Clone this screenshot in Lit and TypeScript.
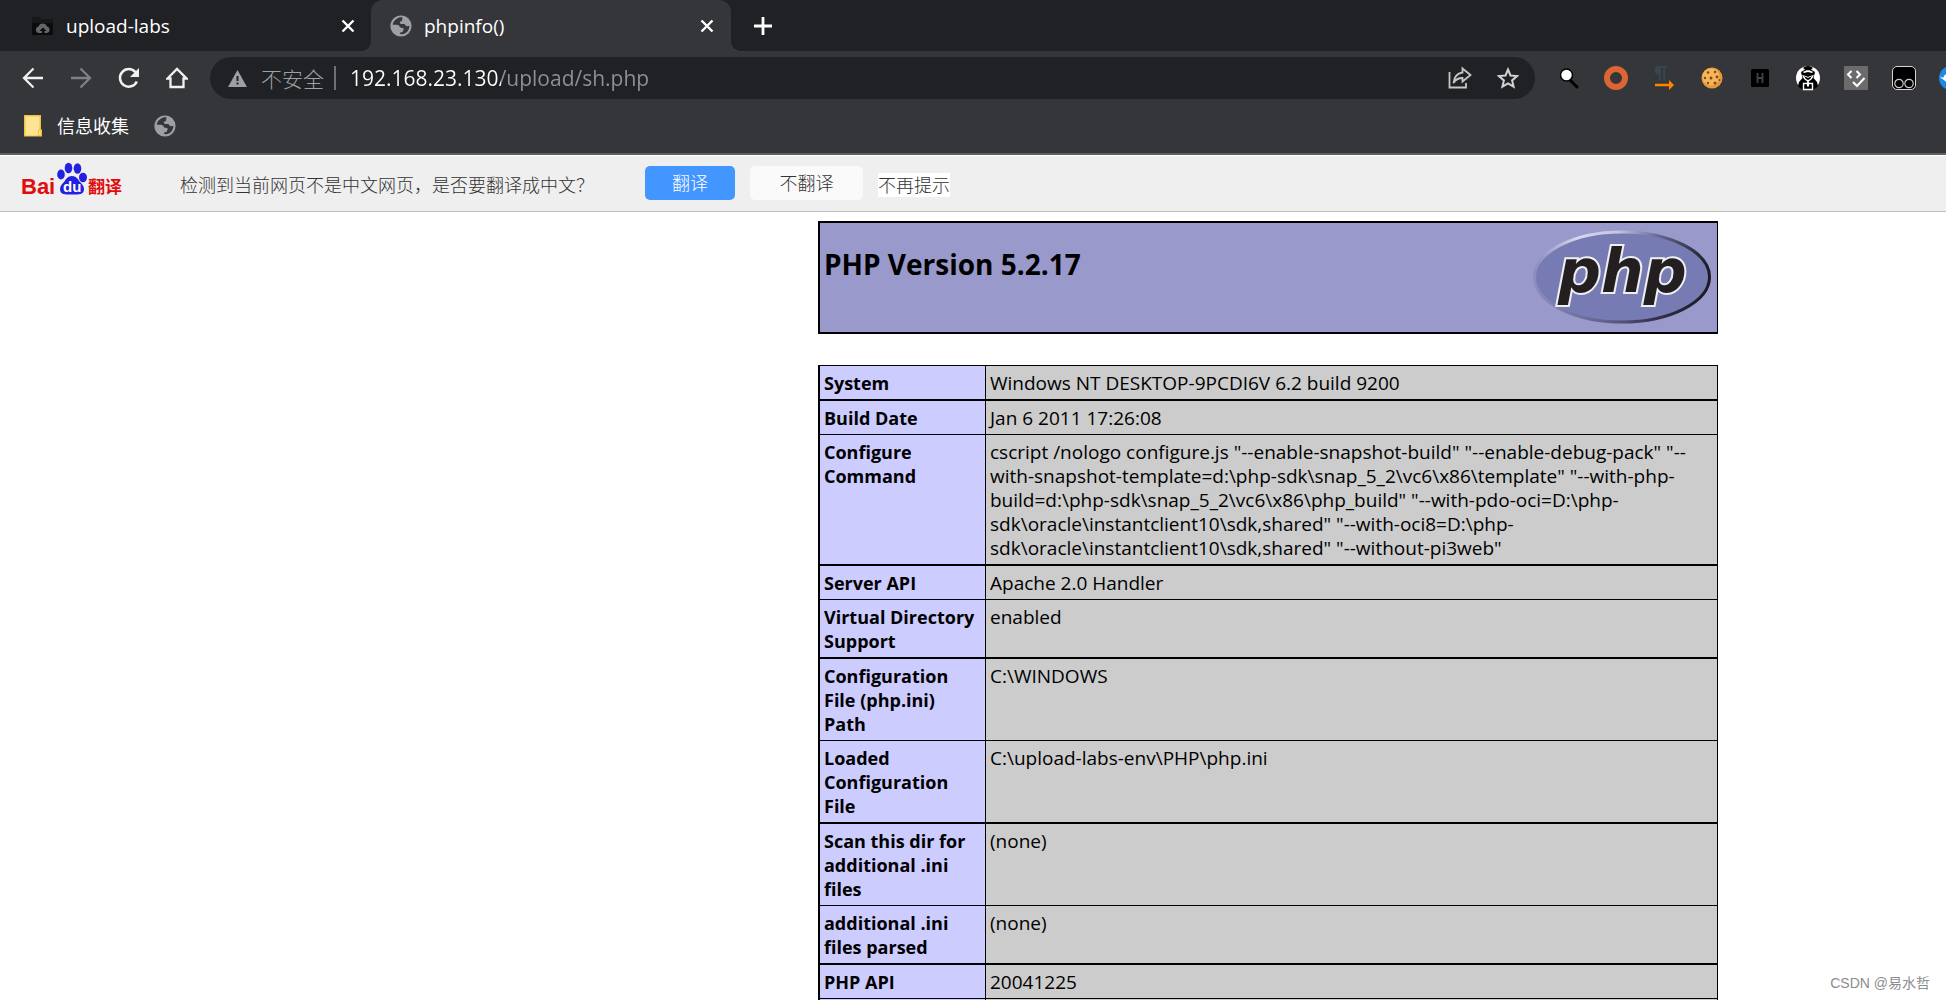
import { LitElement, html, svg, css } from "lit";
import { customElement, property } from "lit/decorators.js";

const globe = svg`
  <circle cx="11" cy="11" r="10.6" fill="#9aa0a6"/>
  <path d="M12.5 2.4c-2.2-.3-4.3.2-6 1.5C4 5.700 2.900 7.500 2.700 9.800c2.100-.2 4.600-.1 5.900.4 1.200.6.7 1.900 1.700 2.300 1.500.5 3.300.1 3.500 1.300.2 1-.9 1.300-.9 2.500 0 1-1.500.9-2.400 1.100-.7.2-.6 1.200-.1 1.700 3.700.3 6.900-1.700 8.200-4.700.6-1.400.8-2.600.8-3.600-1.200.5-2.300.7-3.200.2-1.100-.5-.9-1.600-2.100-1.900-1.600-.3-3.700.1-4.200-1.200-.5-1.200.8-1.600 1.800-2 .8-.4.1-1.500.7-2.400z" fill="#35363a"/>`;

const extensionIcons = [
  { name: "Search", art: svg`<path d="M15 15l7 7" stroke="#000" stroke-width="3" stroke-linecap="round"/><circle cx="11.500" cy="10" r="6" fill="#fff" stroke="#000" stroke-width="1.500"/>` },
  { name: "Ring", art: svg`<circle cx="13" cy="13" r="9" fill="none" stroke="#de6533" stroke-width="6"/>` },
  { name: "Paragraph", art: svg`<path d="M12 1H8a4.500 4.500 0 0 0 0 9v6h1.800V2.500h2.400V16H14V2.500h2V1z" fill="#37474f"/><path d="M4 18.700h14v-3.700l5 5-5 5v-3.700H4z" fill="#ff8200"/>` },
  { name: "Cookie", art: svg`<circle cx="13" cy="13" r="10.500" fill="#e89a3b"/><circle cx="12" cy="12" r="8.500" fill="#f5b659"/><g fill="#86451f"><circle cx="9" cy="7.500" r="1.300"/><circle cx="16" cy="7" r="1.200"/><circle cx="6" cy="13" r="1.200"/><circle cx="12" cy="13" r="1.500"/><circle cx="18" cy="12" r="1.400"/><circle cx="9" cy="18" r="1.200"/><circle cx="16" cy="18" r="1.500"/><circle cx="20.500" cy="15" r="1"/></g>` },
  { name: "H", art: svg`<rect x="4" y="4" width="18" height="18" rx="1.500" fill="#000"/><path d="M10.500 8v10M15.500 8v10M10.500 13h5" stroke="#424347" stroke-width="1.800"/>` },
  { name: "Hooded figure", art: svg`<circle cx="13" cy="13" r="12" fill="#fff"/><path d="M13 1c-2 0-3.500.7-5 2l2 1.500L6 7l1.500 6L4 17l-1 4c2 2 4 3.500 6 4h8c2-.5 4-2 6-4l-1-4-3.500-4L20 7l-4-2.500L18 3c-1.500-1.300-3-2-5-2z" fill="#000"/><path d="M8 7c3-2.500 7-2.500 10 0l-1 1-4-1-4 1z" fill="#fff"/><path d="M7 10l4 1 2 1 2-1 4-1-2 4-4 3-4-3z" fill="#fff"/><path d="M9 11l4 2 4-2-2 3-2 1-2-1z" fill="#000"/><path d="M8.500 18.500h9v6h-9z" fill="none" stroke="#fff" stroke-width="1.400"/><path d="M12 16.500h2v5h-2z" fill="#fff"/>` },
  { name: "Code check", art: svg`<rect x="1" y="1" width="24" height="24" rx="1" fill="#6b6b6b"/><path d="M8.500 6L5 9.500 8.500 13M13.500 6L17 9.500 13.500 13M10 17l4 4 7.500-8" fill="none" stroke="#fff" stroke-width="2"/>` },
  { name: "Tampermonkey", art: svg`<rect x="1.500" y="1.500" width="23" height="23" rx="4.500" fill="#000" stroke="#d6d6d6"/><circle cx="8" cy="18.500" r="4.200" fill="#000" stroke="#c8c8c8" stroke-width="1.200"/><circle cx="18" cy="18.500" r="4.200" fill="#000" stroke="#c8c8c8" stroke-width="1.200"/>` },
  { name: "Bird", art: svg`<circle cx="12" cy="13" r="12" fill="#1e88e5"/><path d="M1 11c1 1 2 1.500 3.500 1.500C5 10 7 8.500 10 9l4 4-1 5c-4 0-6-1-8-3-2-1-3-2-4-4z" fill="#fff"/>` },
];

const facts: { key: string; value: string }[] = [
  { key: "System", value: "Windows NT DESKTOP-9PCDI6V 6.2 build 9200" },
  { key: "Build Date", value: "Jan 6 2011 17:26:08" },
  {
    key: "Configure\nCommand",
    value:
      'cscript /nologo configure.js "--enable-snapshot-build" "--enable-debug-pack" "--\n' +
      'with-snapshot-template=d:\\php-sdk\\snap_5_2\\vc6\\x86\\template" "--with-php-\n' +
      'build=d:\\php-sdk\\snap_5_2\\vc6\\x86\\php_build" "--with-pdo-oci=D:\\php-\n' +
      'sdk\\oracle\\instantclient10\\sdk,shared" "--with-oci8=D:\\php-\n' +
      'sdk\\oracle\\instantclient10\\sdk,shared" "--without-pi3web"',
  },
  { key: "Server API", value: "Apache 2.0 Handler" },
  { key: "Virtual Directory\nSupport", value: "enabled" },
  { key: "Configuration\nFile (php.ini)\nPath", value: "C:\\WINDOWS" },
  { key: "Loaded\nConfiguration\nFile", value: "C:\\upload-labs-env\\PHP\\php.ini" },
  { key: "Scan this dir for\nadditional .ini\nfiles", value: "(none)" },
  { key: "additional .ini\nfiles parsed", value: "(none)" },
  { key: "PHP API", value: "20041225" },
  { key: "", value: "" },
];

const reset = css`
  * { box-sizing: border-box; }
  svg { display: block; flex: none; }
  button { margin: 0; padding: 0; border: 0; background: none; font: inherit; color: inherit; display: grid; place-items: center; }
`;

@customElement("browser-tabs")
export class BrowserTabs extends LitElement {
  static styles = [reset, css`
    :host { display: block; }
    .strip { display: flex; height: 51px; background: #202124; color: #fff; font-size: 19px; }
    .tab { display: flex; align-items: center; height: 51px; padding: 0 14px 0 19px; }
    .first { width: 371px; padding-left: 31px; padding-right: 13px; }
    .active { position: relative; width: 360px; background: #35363a; border-radius: 12px 12px 0 0; }
    .active::before, .active::after { content: ""; position: absolute; bottom: 0; width: 10px; height: 10px; }
    .active::before { left: -10px; background: radial-gradient(circle at 0 0, #202124 10px, #35363a 10px); }
    .active::after { right: -10px; background: radial-gradient(circle at 100% 0, #202124 10px, #35363a 10px); }
    .title { flex: 1; margin-left: 12px; line-height: 24px; }
    .close { width: 20px; height: 20px; }
    .add { width: 64px; height: 51px; }
  `];

  private closeIcon = html`<svg width="14" height="14" viewBox="0 0 14 14"><path d="M1.500 1.500l11 11M12.500 1.500l-11 11" stroke="#fff" stroke-width="2.400"/></svg>`;

  render() {
    return html`<div class="strip">
      <div class="tab first">
        <svg width="23" height="20" viewBox="0 0 23 20"><path d="M1 1h7l2 2h12v15a1 1 0 0 1-1 1H1z" fill="#17181a"/><path d="M1 7h21v11a1 1 0 0 1-1 1H1z" fill="#0b0b0c"/><path d="M8 17a3.300 3.300 0 0 1-.5-6.500 4.500 4.500 0 0 1 8.500 0A3.300 3.300 0 0 1 15.500 17h-2v-2h2L12 11.500 8.500 15H11v2z" fill="#626569"/></svg>
        <span class="title">upload-labs</span>
        <button class="close" aria-label="Close upload-labs">${this.closeIcon}</button>
      </div>
      <div class="tab active">
        <svg width="22" height="22" viewBox="0 0 22 22">${globe}</svg>
        <span class="title">phpinfo()</span>
        <button class="close" aria-label="Close phpinfo()">${this.closeIcon}</button>
      </div>
      <button class="add" aria-label="New tab"><svg width="18" height="18" viewBox="0 0 18 18"><path d="M9 0v18M0 9h18" stroke="#fff" stroke-width="2.800"/></svg></button>
    </div>`;
  }
}

@customElement("browser-toolbar")
export class BrowserToolbar extends LitElement {
  @property() address = "192.168.23.130/upload/sh.php";

  static styles = [reset, css`
    :host { display: block; background: #35363a; border-bottom: 2px solid #5f6064; }
    .bar { display: flex; align-items: center; height: 54px; padding-left: 9px; }
    .nav { width: 48px; height: 48px; }
    .omnibox { flex: 1; min-width: 0; display: flex; align-items: center; height: 42px; margin-left: 9px; padding: 0 15px 0 18px; border-radius: 21px; background: #202124; font-size: 21px; }
    .unsafe { margin-left: 14px; color: #9aa0a6; font-weight: 300; }
    .rule { width: 2px; height: 24px; margin: 0 14px 0 10px; background: #6d7074; }
    .url { flex: 1; min-width: 0; padding: 0; border: 0; outline: 0; font: inherit; line-height: 30px; color: transparent; background: linear-gradient(90deg, #fff 151px, #8f9194 151px); background-clip: text; -webkit-background-clip: text; }
    .share { width: 24px; height: 24px; margin-right: 24px; }
    .star { width: 24px; height: 24px; }
    .extensions { flex: none; display: flex; width: 411px; padding-left: 9px; overflow: hidden; }
    .ext { flex: none; width: 48px; height: 48px; }
    .bookmarks { display: flex; align-items: center; height: 48px; padding: 0 24px 6px; margin: 0; gap: 25px; }
    .bookmark { display: flex; align-items: center; gap: 15px; color: #fff; text-decoration: none; font-size: 18px; line-height: 24px; }
  `];

  render() {
    return html`
      <div class="bar">
        <button class="nav" aria-label="Back"><svg width="22" height="22" viewBox="0 0 22 22" fill="none" stroke="#f1f1f1" stroke-width="2.300"><path d="M21 11H2.500M11.500 1.500L2 11l9.500 9.500"/></svg></button>
        <button class="nav" aria-label="Forward"><svg width="22" height="22" viewBox="0 0 22 22" fill="none" stroke="#808185" stroke-width="2.300"><path d="M1 11h18.500M10.500 1.500L20 11l-9.500 9.500"/></svg></button>
        <button class="nav" aria-label="Reload"><svg width="22" height="22" viewBox="0 0 22 22"><path d="M18.800 14.500A8.800 8.800 0 1 1 17.500 5.200" fill="none" stroke="#f1f1f1" stroke-width="2.500"/><path d="M21 1v9h-9z" fill="#f1f1f1"/></svg></button>
        <button class="nav" aria-label="Home"><svg width="22" height="22" viewBox="0 0 22 22"><path d="M1.500 11.500L11 2l9.500 9.500h-3V20h-13v-8.500z" fill="none" stroke="#f1f1f1" stroke-width="2.300"/></svg></button>
        <div class="omnibox">
          <svg width="19" height="17" viewBox="0 0 19 17"><path d="M9.500 0L19 17H0z" fill="#9aa0a6"/><path d="M9.500 6v5M9.500 12.500v2" stroke="#202124" stroke-width="2"/></svg>
          <label class="unsafe" for="url">不安全</label>
          <span class="rule"></span>
          <input class="url" id="url" .value=${this.address} spellcheck="false">
          <button class="share" aria-label="Share"><svg width="24" height="24" viewBox="0 0 24 24" fill="none" stroke="#c4c7c5" stroke-width="1.800"><path d="M1.500 6v15.500H18V17"/><path d="M14.500 2.500L22.500 9l-8 6.500V12c-4 0-7 1.500-9 5 .5-5.500 3.500-9.500 9-10.500z"/></svg></button>
          <button class="star" aria-label="Bookmark this page"><svg width="22" height="22" viewBox="0 0 22 22"><path d="M11 2.500l2.500 6 6.500.6-4.900 4.300 1.500 6.300L11 16.300l-5.600 3.400 1.500-6.300L2 9.100l6.500-.6z" fill="none" stroke="#d0d2d4" stroke-width="2"/></svg></button>
        </div>
        <div class="extensions">
          ${extensionIcons.map((e) => html`<button class="ext" aria-label=${e.name}><svg width="26" height="26" viewBox="0 0 26 26">${e.art}</svg></button>`)}
        </div>
      </div>
      <nav class="bookmarks">
        <a class="bookmark" href="#"><svg width="18" height="22" viewBox="0 0 18 22"><path d="M0 0h17v14l1 1v6.500H0z" fill="#f0c23e"/><path d="M1.500 1.500h14V14l-1.500 1v5.500H1.500z" fill="#ffe593"/><path d="M15 15.500h1.500v4.500H15z" fill="#ffe593"/></svg><span>信息收集</span></a>
        <a class="bookmark" href="#" aria-label="Website"><svg width="22" height="22" viewBox="0 0 22 22">${globe}</svg></a>
      </nav>`;
  }
}

@customElement("translate-bar")
export class TranslateBar extends LitElement {
  static styles = [reset, css`
    :host { display: block; }
    .bar { display: flex; align-items: center; height: 57px; padding: 0 0 2px 21px; border-top: 1px solid #fff; border-bottom: 1px solid #bdbdbd; background: #efefef; color: #333; font-size: 18px; font-weight: 300; line-height: 24px; }
    .message { width: 465px; margin: 4px 0 0 57px; }
    .btn { height: 34px; border-radius: 5px; }
    .yes { width: 90px; background: #4395ff; color: #fff; }
    .no { width: 113px; margin: 0 15px; background: #fafafa; }
    .never { margin-top: 4px; background: #fff; }
    .brand { font-family: "Liberation Sans", "Noto Sans CJK SC", sans-serif; font-weight: 700; }
  `];

  render() {
    return html`<div class="bar">
      <svg width="102" height="44" viewBox="0 0 102 44" role="img" aria-label="Baidu translate">
        <g class="brand"><text x="0" y="33" font-size="22" fill="#e10c0c">Bai</text>
        <g fill="#2420e0"><ellipse cx="40" cy="13.500" rx="3.800" ry="5"/><ellipse cx="47.500" cy="7" rx="3.800" ry="5.200"/><ellipse cx="56.500" cy="7.500" rx="3.800" ry="5.200"/><ellipse cx="62" cy="16.500" rx="4" ry="4.800"/><path d="M51 15c4 0 6 3 8 6 2 2 4 4 4 7 0 5-4 6-12 5.500-8 .5-12-.5-12-5.500 0-3 2-5 4-7 2-3 4-6 8-6z"/></g>
        <text x="42" y="31" font-size="15" fill="#fff">du</text>
        <text x="67" y="32" font-size="17" fill="#e10c0c">翻译</text></g>
      </svg>
      <span class="message">检测到当前网页不是中文网页，是否要翻译成中文？</span>
      <button class="btn yes">翻译</button>
      <button class="btn no">不翻译</button>
      <button class="never">不再提示</button>
    </div>`;
  }
}

@customElement("php-info")
export class PhpInfo extends LitElement {
  static styles = [reset, css`
    :host { display: block; }
    .page { display: grid; grid-template-columns: 818fr minmax(0, 900px) 228fr; padding-top: 9px; color: #000; }
    .content { grid-column: 2; }
    .banner { display: flex; justify-content: space-between; height: 113px; padding: 5px 5px 0 4px; border: 2px solid #000; border-right-width: 1px; background: #9999cc; }
    .version { margin: 18px 0 0; font-size: 28px; line-height: 36px; font-weight: 700; }
    .facts { width: 100%; margin-top: 31px; border: solid #000; border-width: 1px 1px 0 2px; border-spacing: 0; line-height: 24px; }
    .key, .value { padding: 5px 4px 4px; text-align: left; vertical-align: top; white-space: pre-line; border-bottom: 1px solid #000; }
    .row:nth-child(odd) > * { border-bottom-width: 2px; }
    .key { width: 166px; border-right: 1px solid #000; background: #ccccff; font-size: 18px; font-weight: 700; }
    .value { background: #cccccc; font-size: 19px; }
    .php { font-family: "DejaVu Sans", sans-serif; font-weight: 700; font-style: oblique; }
  `];

  render() {
    return html`<div class="page"><main class="content">
      <header class="banner">
        <h1 class="version">PHP Version 5.2.17</h1>
        <svg width="180" height="100" viewBox="0 0 180 100" role="img" aria-label="PHP logo">
          <defs>
            <linearGradient id="rim" x1="0.200" y1="0" x2="0.850" y2="1">
              <stop offset="0" stop-color="#e8e8f8"/><stop offset="0.220" stop-color="#b0b0d8"/><stop offset="0.420" stop-color="#7070a0"/><stop offset="0.750" stop-color="#25202c"/><stop offset="1" stop-color="#1c1a20"/>
            </linearGradient>
            <linearGradient id="edge" x1="0" y1="0" x2="1" y2="0">
              <stop offset="0" stop-color="#8c8cbe"/><stop offset="0.250" stop-color="#d8d8ee"/><stop offset="0.480" stop-color="#c4c4e0"/><stop offset="0.700" stop-color="#6a6a96"/><stop offset="1" stop-color="#1c1a20"/>
            </linearGradient>
            <linearGradient id="under" x1="0" y1="0" x2="1" y2="0">
              <stop offset="0" stop-color="#8c8cbe"/><stop offset="0.400" stop-color="#62628e"/><stop offset="0.700" stop-color="#34304a"/><stop offset="1" stop-color="#1c1a20"/>
            </linearGradient>
          </defs>
          <ellipse cx="90" cy="49" rx="87.500" ry="45" fill="#777bb3"/>
          <path d="M2.500 49a87.500 45 0 0 1 175 0" fill="none" stroke="url(#edge)" stroke-width="3"/>
          <path d="M2.500 49a87.500 45 0 0 0 175 0" fill="none" stroke="url(#under)" stroke-width="3"/>
          <text class="php" x="26" y="64" font-size="60" fill="#231f20" stroke="#efeff2" stroke-width="4" paint-order="stroke">php</text>
        </svg>
      </header>
      <table class="facts"><tbody>
        ${facts.map((f) => html`<tr class="row"><th class="key" scope="row">${f.key}</th><td class="value">${f.value}</td></tr>`)}
      </tbody></table>
    </main></div>`;
  }
}

@customElement("app-root")
export class AppRoot extends LitElement {
  static styles = css`
    :host { display: block; position: relative; height: 100vh; overflow: hidden; background: #fff; font-family: "Open Sans", "Noto Sans CJK SC", sans-serif; }
    .watermark { position: absolute; right: 16px; bottom: 6px; color: #8c8c8c; font: 14px/22px "Liberation Sans", "Noto Sans CJK SC", sans-serif; }
  `;

  render() {
    return html`
      <browser-tabs></browser-tabs>
      <browser-toolbar></browser-toolbar>
      <translate-bar></translate-bar>
      <php-info></php-info>
      <span class="watermark">CSDN @易水哲</span>`;
  }
}
